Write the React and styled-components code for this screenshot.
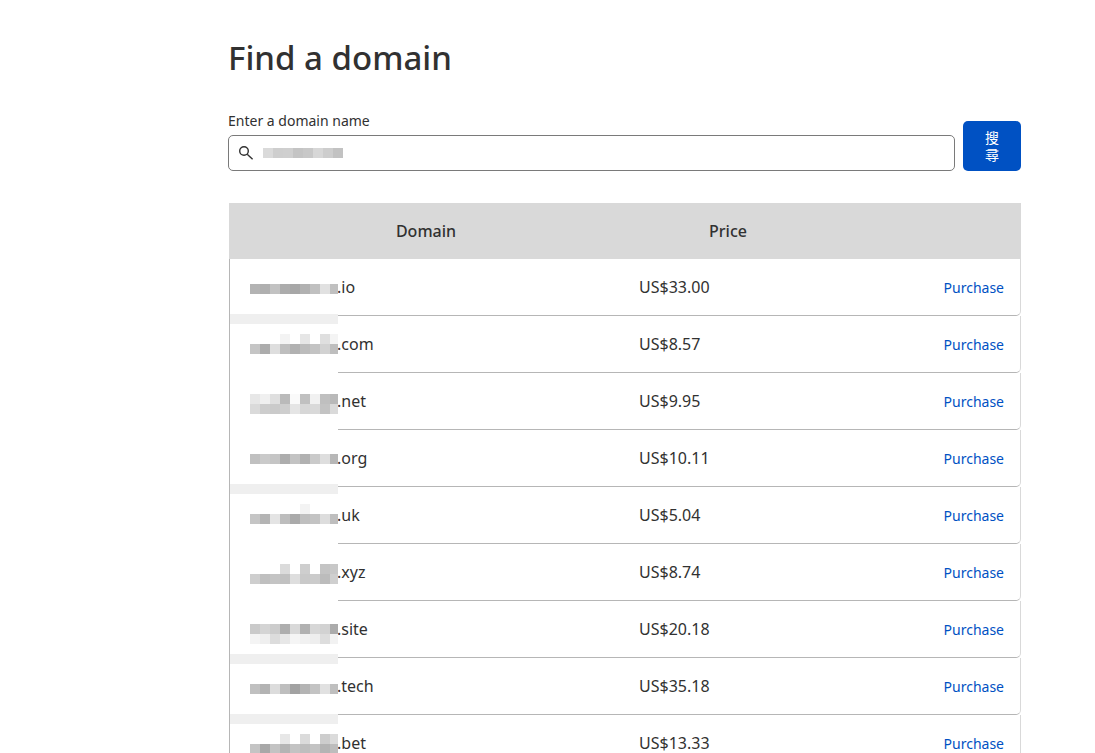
import React from "react";
import styled, { createGlobalStyle } from "styled-components";

const GlobalStyle = createGlobalStyle`
  *, *::before, *::after { box-sizing: border-box; }
  body {
    margin: 0;
    background: #ffffff;
    color: #313131;
    font-family: "Noto Sans", "Open Sans", "Noto Sans CJK TC", sans-serif;
    font-size: 16px;
    line-height: 24px;
  }
`;

const Page = styled.main`
  padding: 32px 74px 32px 228px;
`;

const Title = styled.h1`
  margin: 0;
  font-size: 33px;
  font-weight: 500;
  line-height: 52px;
`;

const SearchForm = styled.form`
  display: flex;
  align-items: flex-end;
  gap: 8px;
  margin: 26px 0 32px;
`;

const Field = styled.div`
  flex: 1;
  min-width: 0;
`;

const Label = styled.label`
  display: block;
  font-size: 14px;
  line-height: 22px;
  padding-bottom: 3px;
`;

const InputBox = styled.div`
  display: flex;
  align-items: center;
  gap: 8px;
  height: 36px;
  padding: 0 8px;
  border: 1px solid #7a7a7a;
  border-radius: 5px;
`;

const SearchInput = styled.input`
  flex: 1;
  min-width: 0;
  border: 0;
  padding: 0;
  outline: 0;
  background: transparent;
  font: inherit;
  color: inherit;
`;

const SearchButton = styled.button`
  width: 58px;
  padding: 8px 22px;
  border: 0;
  border-radius: 5px;
  background: #0051c3;
  color: #ffffff;
  font-family: "Noto Sans CJK TC", sans-serif;
  font-size: 14px;
  line-height: 17px;
`;

const TableArea = styled.section`
  position: relative;
  padding-left: 1px;
`;

const Table = styled.table`
  width: 100%;
  table-layout: fixed;
  border-collapse: separate;
  border-spacing: 0;
`;

const HeadCell = styled.th`
  width: ${(p) => p.$width};
  height: 56px;
  padding: 0;
  background: #d9d9d9;
  font-size: 16px;
  font-weight: 500;
`;

const Cell = styled.td`
  height: 57px;
  padding: 0 16px;
  border-bottom: 1px solid #b6b6b6;
`;

const NameCell = styled(Cell)`
  padding-left: 107px;
  border-left: 1px solid #b6b6b6;
`;

const ActionCell = styled(Cell)`
  text-align: right;
  border-right: 1px solid #d9d9d9;
  border-bottom-right-radius: 5px;
`;

const PurchaseLink = styled.a`
  color: #0051c3;
  font-size: 14px;
  text-decoration: none;
`;

const Mask = styled.svg`
  position: absolute;
  top: 61px;
  left: 2px;
`;

const domains = [
  [".io", "US$33.00"],
  [".com", "US$8.57"],
  [".net", "US$9.95"],
  [".org", "US$10.11"],
  [".uk", "US$5.04"],
  [".xyz", "US$8.74"],
  [".site", "US$20.18"],
  [".tech", "US$35.18"],
  [".bet", "US$13.33"],
];

// Vertical position of each strip, then the grey of each 10px block.
const strips = [
  [20, "b3 af c2 ac a7 b1 c0 e1 c0"],
  [70, "ff ff ff f3 ff e6 ff df f4"],
  [80, "c5 ac de be b1 bc c3 d2 be"],
  [130, "e7 f0 df ba fa c0 f1 bf b9"],
  [140, "da cd ca ce e5 d7 d9 c3 da"],
  [190, "c0 ca c5 ad c3 b1 ca de b7"],
  [240, "ff ff ff ff ff f3 ff ff ff"],
  [250, "c5 b4 e4 bd aa bf c3 dd be"],
  [300, "ff ff ff db ff ce ff c4 c8"],
  [310, "ce bf c4 c1 de c9 cb bc cf"],
  [360, "ca d4 cc ae d9 b1 d7 d2 ab"],
  [370, "f4 ef dc e7 f5 f1 ee dd f2"],
  [420, "c0 b3 dc be a2 b4 c3 e1 bf"],
  [470, "ff ff ff e7 ff db ff cd db"],
  [480, "c4 a8 c3 b4 c3 be c3 b4 bd"],
];
const bands = [50, 220, 390, 450];
const queryBlocks = ["da", "ce", "cf", "c4", "c8", "d7", "cd", "c2"];

const grey = (value) => `#${value}${value}${value}`;

function NameMask() {
  return (
    <Mask width="108" height="500" viewBox="0 0 108 500" shapeRendering="crispEdges" aria-hidden="true">
      <rect width="108" height="500" fill="#ffffff" />
      {bands.map((y) => (
        <rect key={y} y={y} width="108" height="10" fill="#efefef" />
      ))}
      {strips.map(([y, row]) =>
        row.split(" ").map((value, i) => (
          <rect key={`${y}-${i}`} x={20 + i * 10} y={y} width="10" height="10" fill={grey(value)} />
        ))
      )}
    </Mask>
  );
}

export default function App() {
  return (
    <>
      <GlobalStyle />
      <Page>
        <Title>Find a domain</Title>
        <SearchForm onSubmit={(e) => e.preventDefault()}>
          <Field>
            <Label htmlFor="domain-name">Enter a domain name</Label>
            <InputBox>
              <svg width="18" height="18" viewBox="0 0 18 18" fill="none" stroke="#313131" strokeWidth="1.4" aria-hidden="true">
                <circle cx="7" cy="7" r="4.3" />
                <path d="M10.2 10.2 15.6 15.2" />
              </svg>
              <svg width="80" height="10" viewBox="0 0 80 10" shapeRendering="crispEdges" aria-hidden="true">
                {queryBlocks.map((value, i) => (
                  <rect key={i} x={i * 10} width="10" height="10" fill={grey(value)} />
                ))}
              </svg>
              <SearchInput id="domain-name" type="text" />
            </InputBox>
          </Field>
          <SearchButton type="submit">搜尋</SearchButton>
        </SearchForm>
        <TableArea>
          <Table>
            <thead>
              <tr>
                <HeadCell scope="col" $width="394px">Domain</HeadCell>
                <HeadCell scope="col" $width="210px">Price</HeadCell>
                <HeadCell />
              </tr>
            </thead>
            <tbody>
              {domains.map(([name, price]) => (
                <tr key={name}>
                  <NameCell>{name}</NameCell>
                  <Cell>{price}</Cell>
                  <ActionCell>
                    <PurchaseLink href="#purchase">Purchase</PurchaseLink>
                  </ActionCell>
                </tr>
              ))}
            </tbody>
          </Table>
          <NameMask />
        </TableArea>
      </Page>
    </>
  );
}
